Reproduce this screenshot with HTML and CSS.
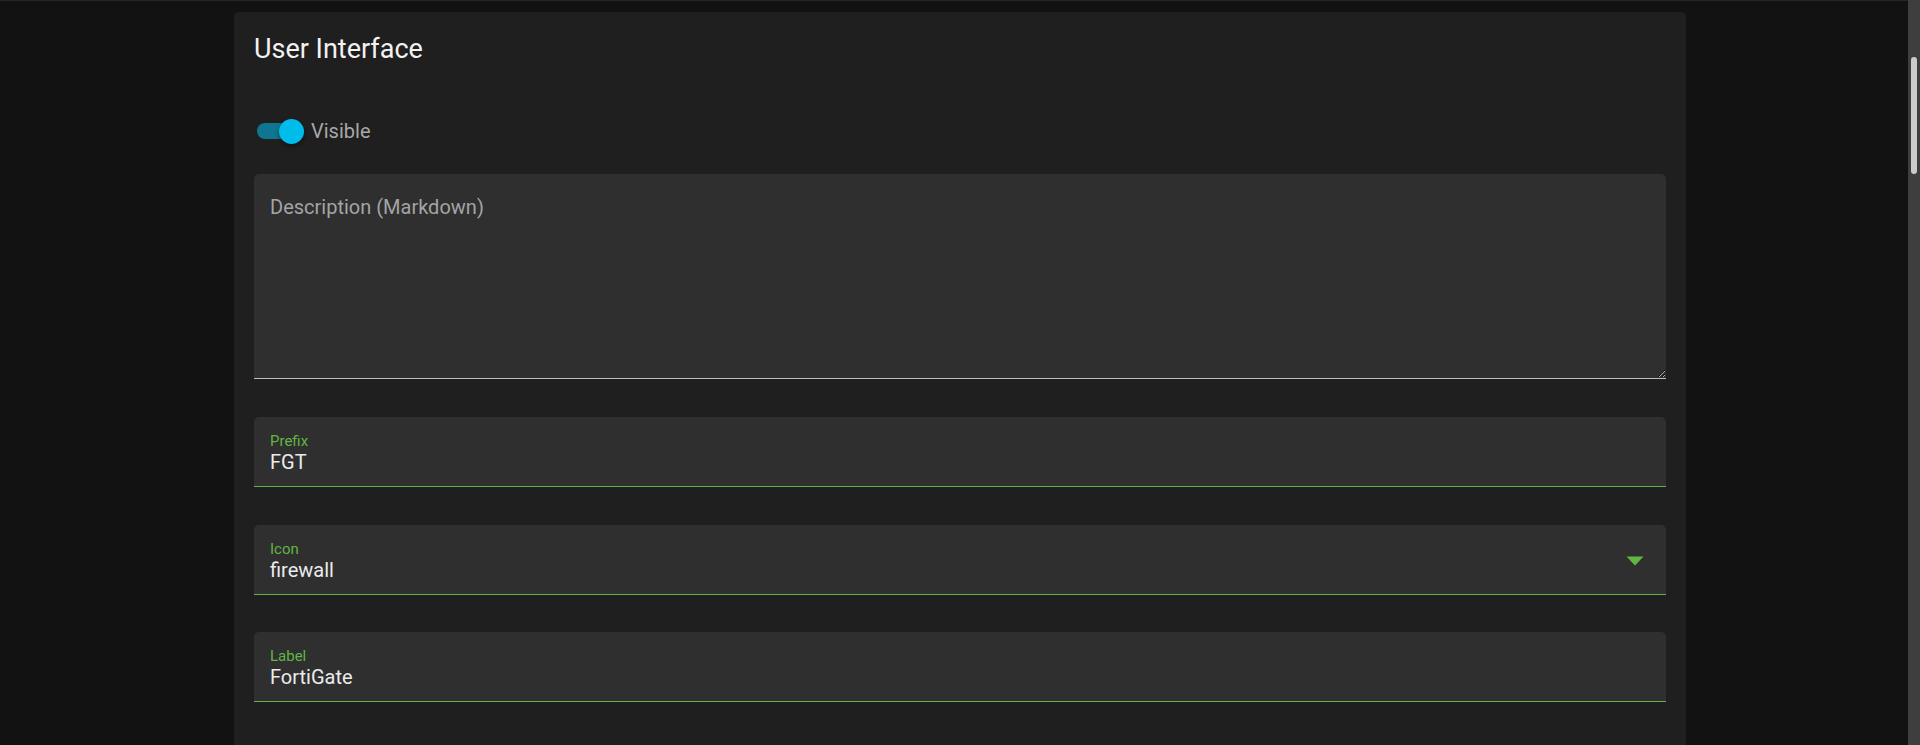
FILE: index.html
```html
<!DOCTYPE html>
<html lang="en">
<head>
<meta charset="utf-8">
<title>User Interface</title>
<link rel="stylesheet" href="styles.css">
</head>
<body>
<div class="topline"></div>
<main class="page">
  <section class="card">
    <h2 class="card-title">User Interface</h2>

    <label class="switch-row">
      <span class="switch">
        <span class="switch-track"></span>
        <span class="switch-thumb"></span>
      </span>
      <span class="switch-label">Visible</span>
    </label>

    <textarea class="textarea" placeholder="Description (Markdown)"></textarea>

    <div class="field">
      <div class="field-body">
        <div class="field-label">Prefix</div>
        <div class="field-value">FGT</div>
      </div>
    </div>

    <div class="field">
      <div class="field-body">
        <div class="field-label">Icon</div>
        <div class="field-value">firewall</div>
      </div>
      <svg class="field-arrow" width="18" height="10" viewBox="0 0 18 10" aria-hidden="true">
        <path d="M0.5 0.5 H17.5 L9 9.5 Z" fill="#62b443"/>
      </svg>
    </div>

    <div class="field">
      <div class="field-body">
        <div class="field-label">Label</div>
        <div class="field-value">FortiGate</div>
      </div>
    </div>
  </section>
</main>
<div class="scrollbar"><div class="scrollbar-thumb"></div></div>
</body>
</html>
```

FILE: styles.css
```css
html, body {
  margin: 0;
  padding: 0;
  height: 100%;
  overflow: hidden;
}

body {
  background: #121212;
  font-family: Roboto, "Liberation Sans", Arial, sans-serif;
  color: #e6e6e6;
}

.topline {
  position: fixed;
  top: 0;
  left: 0;
  right: 0;
  height: 1px;
  background: #24262b;
}

.page {
  display: flex;
  justify-content: center;
  padding-top: 12px;
}

.card {
  width: 1452px;
  box-sizing: border-box;
  background: #1f1f1f;
  border-radius: 5px;
  padding: 21px 20px 80px;
}

.card-title {
  margin: 0 0 46px;
  font-size: 27px;
  line-height: 32px;
  font-weight: 400;
  color: #f2f2f2;
}

.switch-row {
  display: flex;
  align-items: center;
  height: 40px;
  margin-bottom: 23px;
  padding-left: 3px;
}

.switch {
  position: relative;
  width: 47px;
  height: 25px;
  display: flex;
  align-items: center;
}

.switch-track {
  width: 44px;
  height: 16px;
  border-radius: 8px;
  background: #0e7691;
}

.switch-thumb {
  position: absolute;
  right: 0;
  top: 0;
  width: 25px;
  height: 25px;
  border-radius: 50%;
  background: #00bceb;
  box-shadow: 0 2px 4px rgba(0, 0, 0, 0.45);
}

.switch-label {
  margin-left: 7px;
  font-size: 20px;
  line-height: 25px;
  color: #a8a8a8;
}

.textarea {
  display: block;
  width: 100%;
  height: 205px;
  box-sizing: border-box;
  margin: 0;
  padding: 21px 16px 0;
  border: none;
  border-bottom: 1px solid #bdbdbd;
  border-radius: 5px 5px 0 0;
  background: #2f2f2f;
  color: #e6e6e6;
  font-family: Roboto, "Liberation Sans", Arial, sans-serif;
  font-size: 20px;
  line-height: 25px;
  outline: none;
  color-scheme: dark;
}

.textarea::placeholder {
  color: #a4a4a4;
  opacity: 1;
}

.field {
  display: flex;
  align-items: flex-start;
  margin-top: 37.5px;
  height: 70px;
  box-sizing: border-box;
  background: #2f2f2f;
  border-radius: 5px 5px 0 0;
  border-bottom: 1px solid #62b443;
  padding: 15px 16px 0;
}

.textarea + .field {
  margin-top: 38px;
}

.field-body {
  flex: 1;
}

.field-label {
  font-size: 15px;
  line-height: 18px;
  color: #62b443;
}

.field-value {
  font-size: 20px;
  line-height: 25px;
  color: #ebebeb;
}

.field-arrow {
  margin-top: 16px;
  margin-right: 6px;
}

.scrollbar {
  position: fixed;
  top: 0;
  right: 0;
  width: 12px;
  height: 100%;
  background: #3e3e3e;
}

.scrollbar-thumb {
  margin: 57px 0 0 3px;
  width: 6px;
  height: 117px;
  border-radius: 3px;
  background: #cbcbcb;
}
```
